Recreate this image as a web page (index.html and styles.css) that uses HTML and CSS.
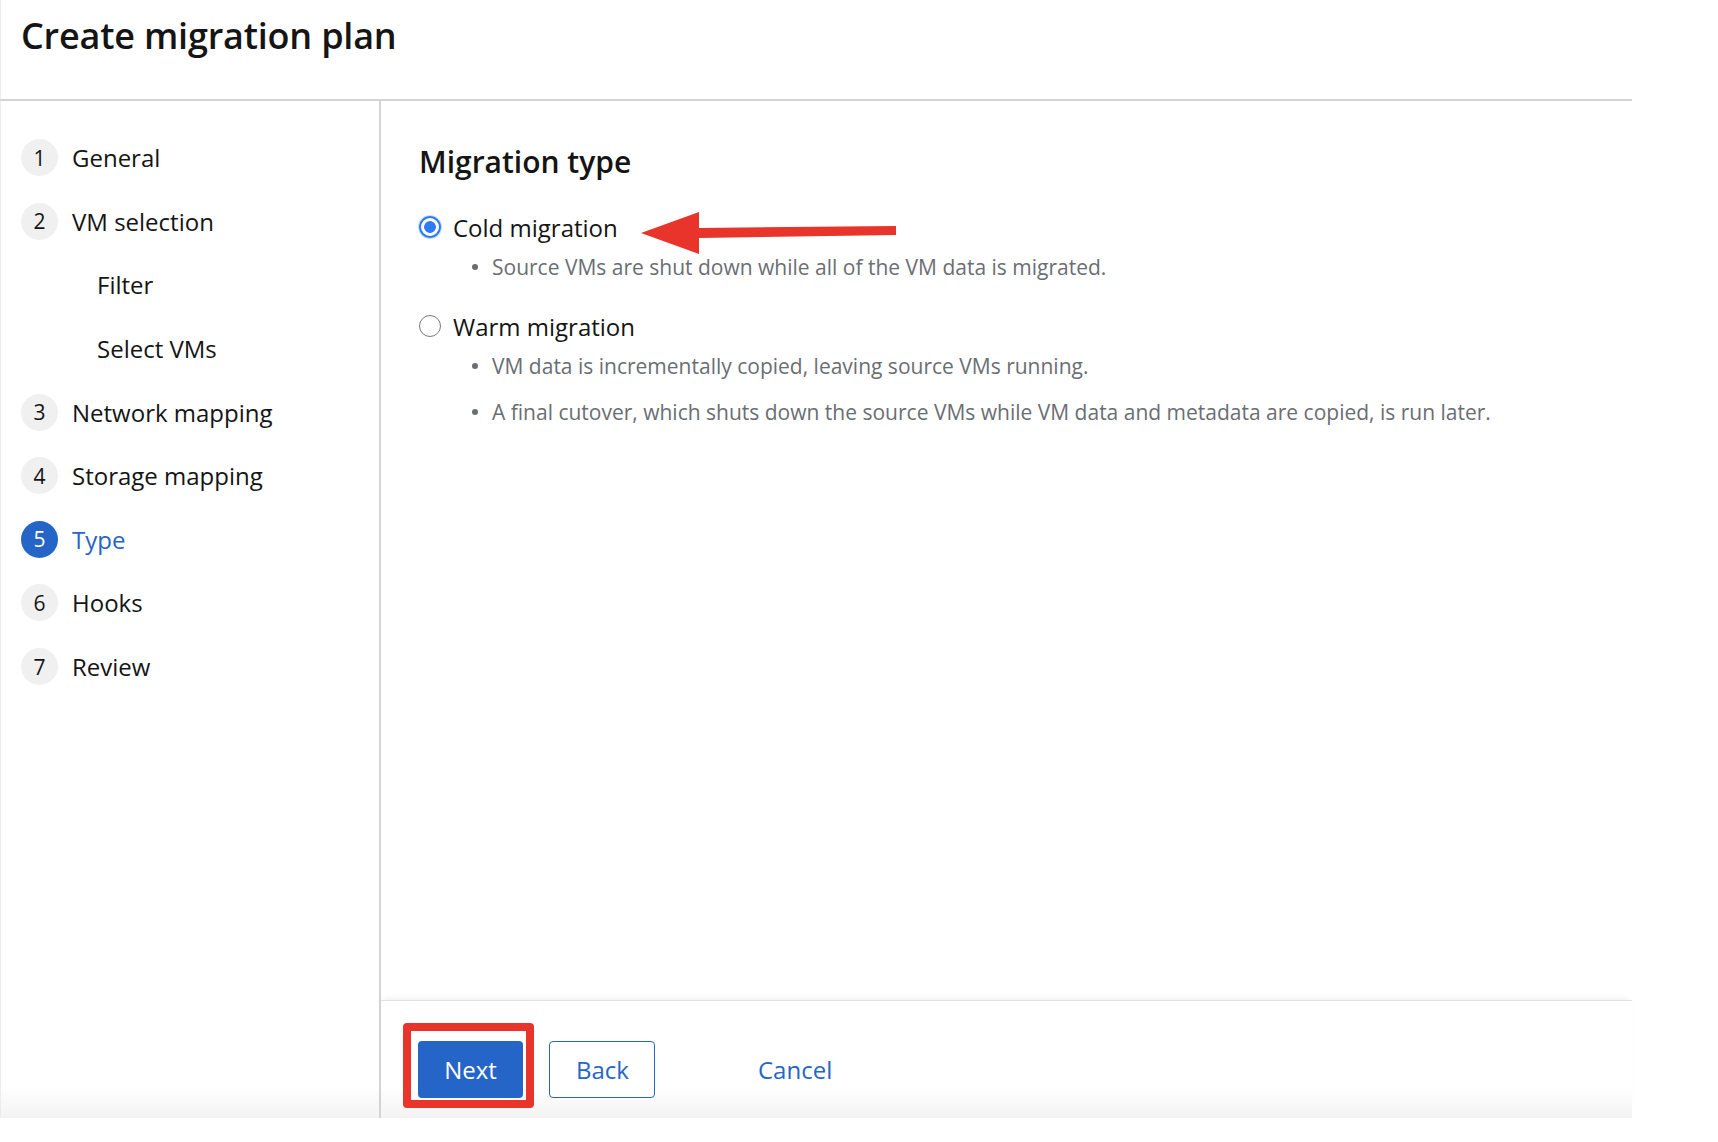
FILE: index.html
```html
<!DOCTYPE html>
<html lang="en">
<head>
<meta charset="utf-8">
<title>Create migration plan</title>
<link rel="stylesheet" href="styles.css">
</head>
<body>
<div class="page">
  <header class="header">
    <h1 class="title">Create migration plan</h1>
  </header>
  <div class="body">
    <nav class="nav">
      <ol class="steps">
        <li class="step"><span class="num">1</span><span class="label">General</span></li>
        <li class="step"><span class="num">2</span><span class="label">VM selection</span></li>
        <li class="step sub"><span class="label">Filter</span></li>
        <li class="step sub"><span class="label">Select VMs</span></li>
        <li class="step"><span class="num">3</span><span class="label">Network mapping</span></li>
        <li class="step"><span class="num">4</span><span class="label">Storage mapping</span></li>
        <li class="step active"><span class="num">5</span><span class="label">Type</span></li>
        <li class="step"><span class="num">6</span><span class="label">Hooks</span></li>
        <li class="step"><span class="num">7</span><span class="label">Review</span></li>
      </ol>
    </nav>
    <main class="main">
      <section class="content">
        <h2 class="section-title">Migration type</h2>
        <div class="option">
          <div class="radio-row"><span class="radio checked"></span><span class="radio-label">Cold migration</span></div>
          <ul class="desc">
            <li>Source VMs are shut down while all of the VM data is migrated.</li>
          </ul>
        </div>
        <div class="option">
          <div class="radio-row"><span class="radio"></span><span class="radio-label">Warm migration</span></div>
          <ul class="desc">
            <li>VM data is incrementally copied, leaving source VMs running.</li>
            <li>A final cutover, which shuts down the source VMs while VM data and metadata are copied, is run later.</li>
          </ul>
        </div>
      </section>
      <footer class="footer">
        <span class="next-wrap"><button class="btn primary">Next</button><span class="highlight"></span></span>
        <button class="btn secondary">Back</button>
        <button class="btn link">Cancel</button>
      </footer>
    </main>
  </div>
  <svg class="arrow" width="266" height="56" viewBox="0 0 266 56" aria-hidden="true">
    <polygon points="5,28 63,7 63,23 260,21 260,30 63,33 63,49" fill="#e8342a"/>
  </svg>
</div>
</body>
</html>
```

FILE: styles.css
```css
* {
  box-sizing: border-box;
}

html,
body {
  margin: 0;
  background: #ffffff;
}

body {
  font-family: "Open Sans", "Liberation Sans", sans-serif;
  color: #151515;
}

.page {
  position: relative;
  width: 1632px;
  height: 1118px;
  display: flex;
  flex-direction: column;
  background: linear-gradient(to bottom, #ffffff 0, #ffffff 1086px, #f3f3f3 1118px);
  box-shadow: inset 1px 0 0 #ececec;
}

.header {
  height: 101px;
  border-bottom: 2px solid #d4d4d4;
  padding: 16px 0 0 21px;
}

.title {
  margin: 0;
  font-size: 36px;
  line-height: 40px;
  font-weight: 600;
  letter-spacing: -0.2px;
}

.body {
  flex: 1;
  display: flex;
  min-height: 0;
}

.nav {
  width: 381px;
  flex: none;
  border-right: 2px solid #d4d4d4;
  padding-top: 25px;
}

.steps {
  list-style: none;
  margin: 0;
  padding: 0;
}

.step {
  height: 63.6px;
  display: flex;
  align-items: center;
  padding-left: 21px;
  font-size: 24px;
}

.step.sub {
  padding-left: 97px;
}

.num {
  flex: none;
  width: 37px;
  height: 37px;
  border-radius: 50%;
  background: #f0f0f0;
  display: flex;
  align-items: center;
  justify-content: center;
  font-size: 21px;
  margin-right: 14px;
}

.label {
  line-height: 37px;
}

.step.active .num {
  background: #2565c7;
  color: #ffffff;
}

.step.active .label {
  color: #2565c7;
}

.main {
  flex: 1;
  display: flex;
  flex-direction: column;
  min-width: 0;
}

.content {
  flex: 1;
  padding: 43px 0 0 38px;
}

.section-title {
  margin: 0 0 29px;
  font-size: 30px;
  line-height: 36px;
  font-weight: 600;
}

.radio-row {
  display: flex;
  align-items: center;
  height: 36px;
  font-size: 24px;
}

.radio {
  flex: none;
  width: 22px;
  height: 22px;
  border-radius: 50%;
  border: 1.5px solid #7a7a7a;
  background: #ffffff;
  margin-right: 12px;
}

.radio.checked {
  border: 2.5px solid #2f7bf5;
  background: radial-gradient(circle, #2f7bf5 0, #2f7bf5 5.5px, #ffffff 6.2px);
  box-shadow: 0 0 0 1px rgba(47, 123, 245, 0.25);
}

.desc {
  list-style: none;
  margin: 7px 0 0;
  padding: 0 0 0 53px;
}

.desc li {
  display: flex;
  align-items: center;
  height: 30px;
  font-size: 21px;
  line-height: 30px;
  color: #6a6e73;
}

.desc li::before {
  content: "";
  flex: none;
  width: 6px;
  height: 6px;
  border-radius: 50%;
  background: #6a6e73;
  margin-right: 14px;
}

.desc li + li {
  margin-top: 16px;
}

.option + .option {
  margin-top: 26px;
}

.footer {
  height: 118px;
  flex: none;
  border-top: 1px solid #e2e2e2;
  box-shadow: 0 -5px 6px -3px rgba(0, 0, 0, 0.06);
  display: flex;
  align-items: flex-start;
  padding: 40px 0 0 37px;
}

.btn {
  height: 57px;
  font-family: inherit;
  font-size: 24px;
  line-height: 1;
  border-radius: 4px;
  padding: 0 26px;
  border: 0;
  cursor: pointer;
}

.primary {
  width: 105px;
  background: #2565c7;
  color: #ffffff;
}

.secondary {
  width: 106px;
  margin-left: 26px;
  background: #ffffff;
  color: #2565c7;
  border: 1.5px solid #2565c7;
}

.link {
  margin-left: 77px;
  background: transparent;
  color: #2565c7;
}

.next-wrap {
  position: relative;
  display: inline-flex;
}

.highlight {
  position: absolute;
  left: -15px;
  top: -18px;
  right: -11px;
  bottom: -10px;
  border: 8px solid #e8342a;
  border-radius: 4px;
  pointer-events: none;
}

.arrow {
  position: absolute;
  left: 636px;
  top: 205px;
  pointer-events: none;
}
```
